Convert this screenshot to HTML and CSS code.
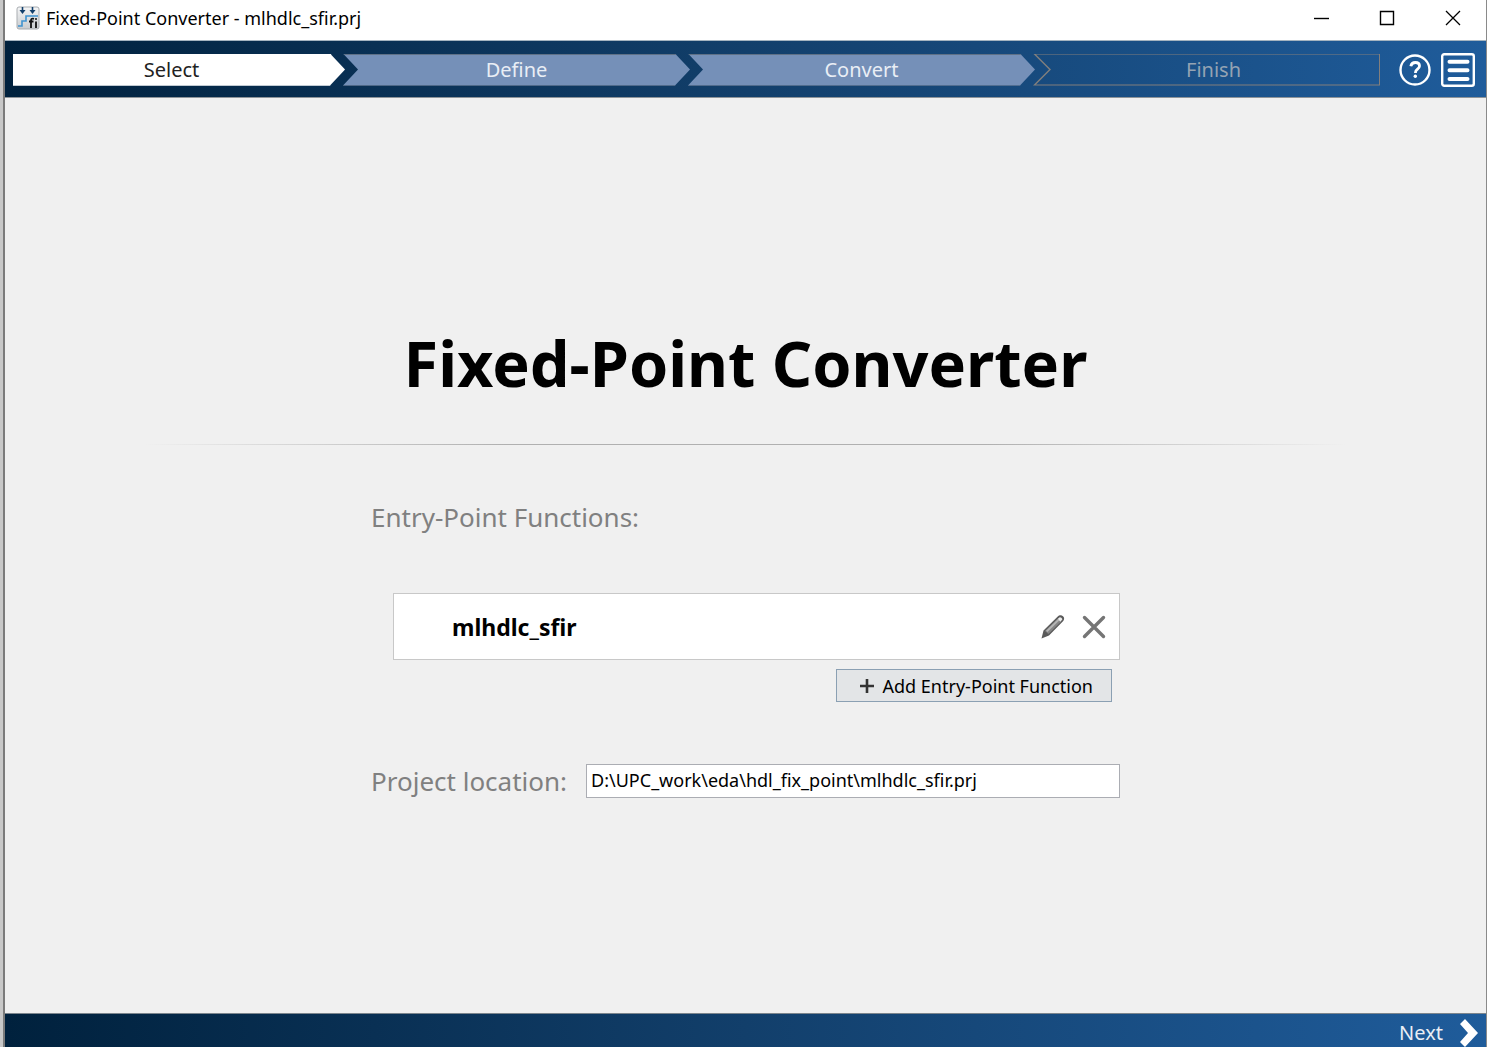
FILE: index.html
```
<!DOCTYPE html>
<html lang="en">
<head>
  <meta charset="UTF-8" />
  <meta name="viewport" content="width=device-width, initial-scale=1.0" />
  <title>Fixed-Point Converter - mlhdlc_sfir.prj</title>
  <link rel="stylesheet" href="styles.css">
</head>
<body>
  <div class="window">
    <header class="titlebar">
      <svg class="app-icon" width="24" height="24" viewBox="0 0 24 24" aria-hidden="true">
        <defs>
          <linearGradient id="tile" x1="0" y1="0" x2="0" y2="1">
            <stop offset="0" stop-color="#f4f5f6" />
            <stop offset="1" stop-color="#c9cccf" />
          </linearGradient>
        </defs>
        <rect x="1" y="1" width="22" height="22" rx="2" fill="url(#tile)" stroke="#a9adb1" />
        <path d="M2 20h4v-5h4v-5h12" fill="none" stroke="#3f93cf" stroke-width="1.600" />
        <path d="M6.500 1v5M16.500 1v5" stroke="#123f6b" stroke-width="1.600" />
        <path d="M3.500 4h6l-3 4zM13.500 4h6l-3 4z" fill="#123f6b" />
        <path d="M18 12.800c-2.500-.8-3 .4-3 2V22M13 15.500h4.500M20 15.500V22" fill="none" stroke="#111" stroke-width="1.800" />
        <circle cx="20" cy="13" r="1" fill="#111" />
      </svg>
      <span class="window-title">Fixed-Point Converter - mlhdlc_sfir.prj</span>
      <div class="window-controls">
        <button type="button" aria-label="Minimize">
          <svg width="16" height="16" viewBox="0 0 16 16"><path d="M1 8.500h15" stroke="#000" stroke-width="1.400" /></svg>
        </button>
        <button type="button" aria-label="Maximize">
          <svg width="16" height="16" viewBox="0 0 16 16"><path d="M1.500 1.500h13v13h-13z" fill="none" stroke="#000" stroke-width="1.400" /></svg>
        </button>
        <button type="button" aria-label="Close">
          <svg width="16" height="16" viewBox="0 0 16 16"><path d="M1 1l14 14M15 1L1 15" stroke="#000" stroke-width="1.300" /></svg>
        </button>
      </div>
    </header>

    <nav class="toolbar">
      <div class="steps">
        <button type="button" class="step active" aria-current="step">Select</button>
        <button type="button" class="step">Define</button>
        <button type="button" class="step">Convert</button>
        <button type="button" class="step last" disabled>Finish</button>
      </div>
      <button type="button" class="tool" aria-label="Help">
        <svg width="34" height="34" viewBox="0 0 34 34" fill="none" stroke="#fff">
          <circle cx="17" cy="17" r="14.500" stroke-width="2.400" />
          <path d="M12.800 13.200c.5-2.700 2.300-3.700 4.500-3.700 2.500 0 4.200 1.400 4.200 3.500 0 3-4 3.200-4 6.200v.8" stroke-width="2.800" />
          <circle cx="17.300" cy="23.300" r="1.700" fill="#fff" stroke="none" />
        </svg>
      </button>
      <button type="button" class="tool" aria-label="Menu">
        <svg width="34" height="34" viewBox="0 0 34 34" fill="none" stroke="#fff">
          <rect x="1.200" y="1.200" width="31.600" height="31.600" rx="2" stroke-width="2.400" />
          <path d="M8.500 8.700h18M8.500 17.300h18M8.500 26h18" stroke-width="4" stroke-linecap="round" />
        </svg>
      </button>
    </nav>

    <main class="page">
      <h1>Fixed-Point Converter</h1>
      <div class="divider"></div>
      <form class="project">
        <h2>Entry-Point Functions:</h2>
        <div class="function-card">
          <span class="function-name">mlhdlc_sfir</span>
          <button type="button" aria-label="Edit function">
            <svg width="26" height="26" viewBox="0 0 26 26">
              <path d="M1.500 24.500l2-8L17.500 2.800c2-2 4-1.800 5.500-.5s1.500 3.300 0 5L9 21.500z" fill="#5a5a5a" />
              <path d="M5 17L17.500 4.800l3.500 3L8.500 20z" fill="#858585" />
              <path d="M6 16.800L18 5l1.500 1.300L7.500 18z" fill="#b5b5b5" />
              <path d="M17.800 4.800l2-1.600c1.500 0 2.500 1 2.500 2.300l-2 2.200z" fill="#ededed" />
            </svg>
          </button>
          <button type="button" aria-label="Remove function">
            <svg width="26" height="26" viewBox="0 0 26 26"><path d="M3.500 3.500l19 19M22.500 3.500l-19 19" stroke="#757575" stroke-width="3.400" stroke-linecap="round" /></svg>
          </button>
        </div>
        <button type="button" class="add-function">
          <svg width="16" height="16" viewBox="0 0 16 16" aria-hidden="true"><path d="M1 8h14M8 1v14" stroke="#333" stroke-width="2.600" /></svg>
          Add Entry-Point Function
        </button>
        <div class="location">
          <label for="location">Project location:</label>
          <input type="text" id="location" value="D:\UPC_work\eda\hdl_fix_point\mlhdlc_sfir.prj">
        </div>
      </form>
    </main>

    <footer class="footer">
      <button type="button" class="next">
        Next
        <svg width="20" height="28" viewBox="0 0 20 28" aria-hidden="true"><path d="M1 5L6 0l13 14L6 28l-5-5 8-9z" fill="#fff" /></svg>
      </button>
    </footer>
  </div>
</body>
</html>
```
FILE: styles.css
```
:root {
  --bar-dark: #00213d;
  --bar-mid: #123f6b;
  --bar-light: #1f5c9b;
  --page-bg: #f0f0f0;
  --label-color: #808080;
  --step-bg: #7590b8;
  --step-border: #827f7d;
}

* {
  box-sizing: border-box;
}

body {
  margin: 0;
  font-family: "Noto Sans", "Open Sans", sans-serif;
  background-color: var(--page-bg);
  color: #000;
}

button {
  padding: 0;
  border: none;
  background: none;
  font-family: inherit;
  color: inherit;
  cursor: pointer;
}

svg {
  display: block;
}

/* window frame */
.window {
  display: flex;
  flex-direction: column;
  min-height: 100vh;
  border-left: 2px solid #7b7b7b;
  border-right: 1px solid #8a8a8a;
  margin-left: 3px;
  box-shadow: -3px 0 0 #c8c8c8;
}

.titlebar {
  display: flex;
  align-items: center;
  height: 41px;
  padding: 0 25px 4px 11px;
  border-bottom: 1px solid #a5b4c0;
  background-color: #fff;
}

.window-title {
  margin-left: 6px;
  font-size: 18px;
}

.window-controls {
  display: flex;
  gap: 50px;
  margin-left: auto;
}

/* step bar */
.toolbar {
  display: flex;
  align-items: center;
  height: 57px;
  padding: 1px 11px 0 8px;
  border-bottom: 1px solid #8e9499;
  background: linear-gradient(90deg, var(--bar-dark), var(--bar-mid) 50%, var(--bar-light));
}

.steps {
  display: flex;
  flex: 1;
  margin-right: 18px;
}

.step {
  flex: 1;
  height: 32px;
  margin-left: -2px;
  border-top: 1px solid #5f7187;
  border-bottom: 1px solid #5f7187;
  background-color: var(--step-bg);
  color: #e9eef5;
  font-size: 20px;
  line-height: 28px;
  clip-path: polygon(0 0, calc(100% - 15px) 0, 100% 50%, calc(100% - 15px) 100%, 0 100%, 15px 50%);
}

.step.active {
  flex: 0 0 332px;
  margin-left: 0;
  padding-right: 15px;
  border-color: #fff;
  background-color: #fff;
  color: #222;
  clip-path: polygon(0 0, calc(100% - 15px) 0, 100% 50%, calc(100% - 15px) 100%, 0 100%);
}

/* only the outline of the last step is painted */
.step.last {
  position: relative;
  border-color: transparent;
  background: none;
  color: #94a3b3;
  text-indent: 14px;
  clip-path: none;
}

.step.last::before {
  content: "";
  position: absolute;
  inset: -1px 0;
  background-color: var(--step-border);
  clip-path: polygon(evenodd, 0 0, 100% 0, 100% 100%, 0 100%, 16px 50%, 0 0, 3px 1px, 18px 50%, 3px calc(100% - 1px), calc(100% - 1px) calc(100% - 1px), calc(100% - 1px) 1px, 3px 1px);
}

.tool + .tool {
  margin-left: 9px;
}

@media (max-width: 1100px) {
  .step.active {
    flex-basis: 24%;
  }
}

/* page */
.page {
  display: flex;
  flex: 1;
  flex-direction: column;
  align-items: center;
  padding: 220px 24px 24px;
}

h1 {
  margin: 0;
  font-size: 63px;
  line-height: 90px;
}

.divider {
  width: 84%;
  height: 1px;
  margin-top: 36px;
  background: linear-gradient(90deg, transparent, #b0b0b0 30%, #b0b0b0 70%, transparent);
}

.project {
  display: flex;
  flex-direction: column;
  width: 100%;
  max-width: 749px;
  margin-top: 54px;
}

h2,
.location label {
  margin: 0;
  color: var(--label-color);
  font-size: 26px;
  font-weight: 400;
  line-height: 36px;
}

.function-card {
  display: flex;
  align-items: center;
  gap: 15px;
  height: 67px;
  margin: 58px 0 0 22px;
  padding: 0 12px 0 58px;
  border: 1px solid #c8c8c8;
  background-color: #fff;
}

.function-name {
  flex: 1;
  font-size: 23px;
  font-weight: 700;
  line-height: 28px;
}

.add-function {
  display: flex;
  align-items: center;
  align-self: flex-end;
  gap: 8px;
  height: 33px;
  margin: 9px 8px 0 0;
  padding: 0 18px 0 22px;
  border: 1px solid #8ba0b3;
  background-color: #e3e5e7;
  font-size: 18px;
}

.location {
  display: flex;
  align-items: center;
  gap: 19px;
  margin-top: 61px;
}

.location input {
  flex: 1;
  min-width: 0;
  height: 34px;
  padding: 0 4px 2px;
  border: 1px solid #abadb3;
  background-color: #fff;
  color: #000;
  font-family: inherit;
  font-size: 18px;
}

/* bottom bar */
.footer {
  display: flex;
  justify-content: flex-end;
  height: 34px;
  padding: 4px 7px 0 0;
  border-top: 1px solid #7c858d;
  background: linear-gradient(90deg, var(--bar-dark), var(--bar-mid) 50%, var(--bar-light));
}

.next {
  display: flex;
  align-items: center;
  gap: 16px;
  color: #e9eef5;
  font-size: 20px;
}
```
